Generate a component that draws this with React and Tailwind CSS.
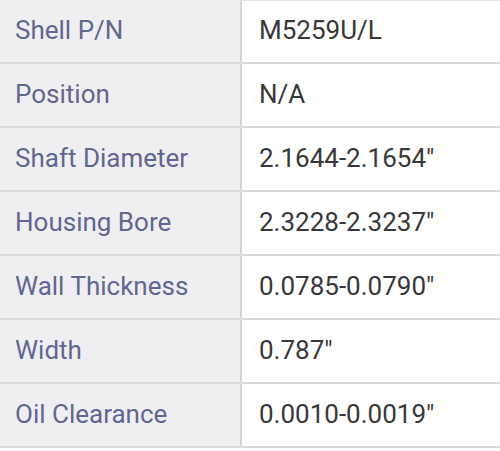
const rows = [
  ["Shell P/N", "M5259U/L"],
  ["Position", "N/A"],
  ["Shaft Diameter", '2.1644-2.1654"'],
  ["Housing Bore", '2.3228-2.3237"'],
  ["Wall Thickness", '0.0785-0.0790"'],
  ["Width", '0.787"'],
  ["Oil Clearance", '0.0010-0.0019"'],
];

const App = () => {
  return (
    <div className="w-[500px] h-[451px] bg-white font-['Roboto',sans-serif]">
      {rows.map(([label, value], i) => (
        <div key={label} className="flex h-[64px] border-b-2 border-[#dadada]">
          <div className="w-[240px] flex items-center pl-[15px] pb-[2px] bg-[#efeff1] text-[#5f6792] text-[26px]">
            {label}
          </div>
          <div
            className={
              "flex-1 flex items-center pl-[17px] pb-[2px] border-l-2 border-[#d6d6d6] text-[#383838] text-[26px]" +
              (i === 0 ? " border-t border-t-[#e4e4e4]" : "")
            }
          >
            {value}
          </div>
        </div>
      ))}
    </div>
  );
};

export default App;
